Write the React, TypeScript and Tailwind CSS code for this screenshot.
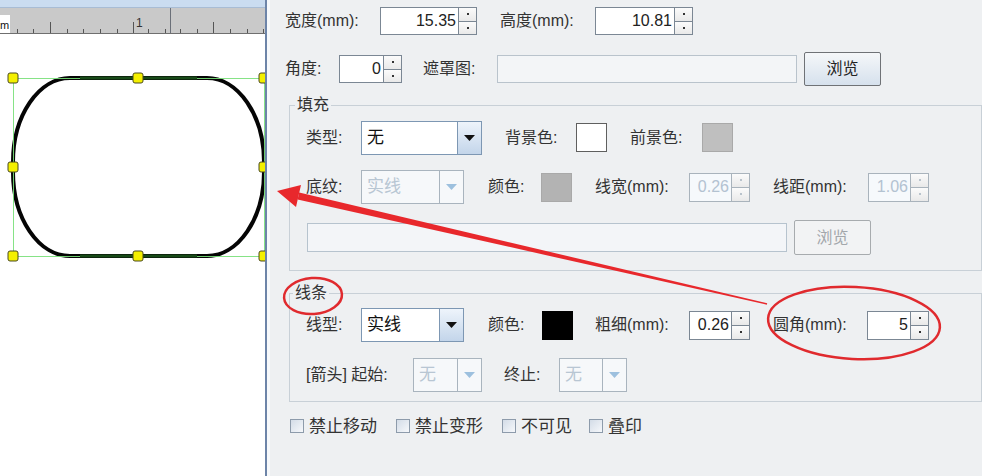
import React from 'react';
import clsx from 'clsx';

const Label = ({ w, children }: { w: string; children: React.ReactNode }) => (
  <span className={clsx('shrink-0 whitespace-nowrap text-[16px] leading-none text-[#333]', w)}>{children}</span>
);

const Spin = ({ value, w, h = 'h-[29px]', disabled }: { value: string; w: string; h?: string; disabled?: boolean }) => (
  <div
    className={clsx(
      'flex shrink-0 border',
      w,
      h,
      disabled ? 'border-[#a9b3bc] bg-[#f6f9fc] text-[#b3c2d1]' : 'border-[#7b8794] bg-white text-[#222]'
    )}
  >
    <div className="flex flex-1 items-center justify-end pr-[2px] text-[16px]">{value}</div>
    <div className={clsx('flex w-[18px] flex-col border-l', disabled ? 'border-[#a9b3bc]' : 'border-[#7b8794]')}>
      <div className="flex flex-1 items-center justify-center bg-linear-to-b from-[#fbfbfb] to-[#e9e9e9]">
        <div className={clsx('h-[2px] w-[2px]', disabled ? 'bg-[#b9c3cc]' : 'bg-[#333]')} />
      </div>
      <div
        className={clsx(
          'flex flex-1 items-center justify-center border-t bg-linear-to-b from-[#fbfbfb] to-[#e9e9e9]',
          disabled ? 'border-[#a9b3bc]' : 'border-[#7b8794]'
        )}
      >
        <div className={clsx('h-[2px] w-[2px]', disabled ? 'bg-[#b9c3cc]' : 'bg-[#333]')} />
      </div>
    </div>
  </div>
);

const Combo = ({ value, w, disabled }: { value: string; w: string; disabled?: boolean }) => (
  <div
    className={clsx(
      'flex h-[34px] shrink-0 border',
      w,
      disabled ? 'border-[#a9b4be] bg-[#f6f8fa] text-[#b8c6d3]' : 'border-[#7d97b3] bg-white text-[#111]'
    )}
  >
    <div className="flex flex-1 items-center pl-[5px] text-[17px]">{value}</div>
    <div
      className={clsx(
        'flex w-[24px] items-center justify-center border-l',
        disabled ? 'border-[#a9b4be] bg-[#f6f8fa]' : 'border-[#7d97b3] bg-linear-to-b from-[#eef4fb] to-[#c3d5ea]'
      )}
    >
      <svg width="11" height="6" viewBox="0 0 11 6">
        <path d="M0 0 H11 L5.5 6 Z" fill={disabled ? '#9dc0de' : '#111'} />
      </svg>
    </div>
  </div>
);

const Swatch = ({ color }: { color: string }) => (
  <div className={clsx('h-[29px] w-[31px] shrink-0 border', color)} />
);

const Button = ({ h, disabled }: { h: string; disabled?: boolean }) => (
  <div
    className={clsx(
      'flex w-[77px] shrink-0 items-center justify-center rounded-[2px] border text-[16px]',
      h,
      disabled
        ? 'border-[#a7abae] bg-[#f2f3f4] text-[#a3a7ab]'
        : 'border-[#6f7276] bg-linear-to-b from-[#f5f7f9] to-[#d6e1ed] text-[#222]'
    )}
  >
    浏览
  </div>
);

const Check = ({ w, label }: { w: string; label: string }) => (
  <div className={clsx('flex shrink-0 items-center', w)}>
    <div className="h-[14px] w-[14px] border border-[#8d9bab] bg-linear-to-br from-[#d3dce7] to-[#f6f8fb]" />
    <span className="ml-[5px] text-[17px] leading-none text-[#333]">{label}</span>
  </div>
);

const Ruler = () => {
  const small = [17, 33, 67, 83, 100, 117, 148, 165, 180, 197, 230, 247, 263];
  const tall = [50, 133, 213];
  return (
    <svg width="265" height="26" className="block">
      <rect width="265" height="26" fill="#c9c9c9" />
      {small.map((x) => (
        <line key={x} x1={x + 0.5} y1="21" x2={x + 0.5} y2="26" stroke="#555" />
      ))}
      {tall.map((x) => (
        <line key={x} x1={x + 0.5} y1="14" x2={x + 0.5} y2="26" stroke="#555" />
      ))}
      <line x1="170.5" y1="0" x2="170.5" y2="26" stroke="#6a6f78" />
      <rect x="0" y="7" width="10" height="19" fill="#fff" />
      <text x="0" y="21" fontSize="11" fill="#111" fontFamily="Liberation Sans, sans-serif">
        m
      </text>
      <text x="136" y="19" fontSize="12" fill="#333" fontFamily="Liberation Sans, sans-serif">
        1
      </text>
      <line x1="0" y1="25.5" x2="265" y2="25.5" stroke="#6f6f6f" />
    </svg>
  );
};

const Canvas = () => {
  const handles: [number, number][] = [
    [13, 78],
    [138, 78],
    [264, 78],
    [13, 167],
    [264, 167],
    [13, 256],
    [138, 256],
    [264, 256],
  ];
  return (
    <svg width="265" height="442" viewBox="0 34 265 442" className="block">
      <path
        d="M70 78 H207 A57 84 0 0 1 264 162 V172 A57 84 0 0 1 207 256 H70 A57 84 0 0 1 13 172 V162 A57 84 0 0 1 70 78 Z"
        fill="none"
        stroke="#050505"
        strokeWidth="4"
      />
      <rect x="13.5" y="78.5" width="251" height="178" fill="none" stroke="#79e079" strokeWidth="1" opacity="0.9" />
      <line x1="80" y1="78" x2="197" y2="78" stroke="#184a18" strokeWidth="3" />
      <line x1="80" y1="256" x2="197" y2="256" stroke="#184a18" strokeWidth="3" />
      {handles.map(([x, y]) => (
        <rect key={`${x}-${y}`} x={x - 5} y={y - 5} width="10" height="10" rx="2" fill="#f4f000" stroke="#4a4a20" />
      ))}
    </svg>
  );
};

export default function App() {
  return (
    <div className="relative flex h-[476px] w-[982px] overflow-hidden bg-[#eef0f2] font-['Liberation_Sans','Noto_Sans_CJK_SC',sans-serif]">
      <div className="flex w-[265px] shrink-0 flex-col overflow-hidden bg-white">
        <div className="h-[8px] border-b border-[#a8bcd4] bg-[#cadcf0]" />
        <Ruler />
        <Canvas />
      </div>
      <div className="w-[2px] shrink-0 bg-[#6d84a8]" />

      <div className="flex flex-1 flex-col border-l-[3px] border-[#f7f9fb] pt-[7px]">
        <div className="flex h-[28px] items-center pl-[15px]">
          <Label w="w-[95px]">宽度(mm):</Label>
          <Spin w="w-[97px]" h="h-[28px]" value="15.35" />
          <Label w="w-[95px] ml-[23px]">高度(mm):</Label>
          <Spin w="w-[98px]" h="h-[28px]" value="10.81" />
        </div>

        <div className="mt-[20px] flex h-[28px] items-center pl-[15px]">
          <Label w="w-[54px]">角度:</Label>
          <Spin w="w-[63px]" h="h-[28px]" value="0" />
          <Label w="w-[74px] ml-[21px]">遮罩图:</Label>
          <div className="h-[28px] w-[300px] shrink-0 border border-[#b9c3cc] bg-[#f3f5f7]" />
          <div className="ml-[7px]">
            <Button h="h-[34px]" />
          </div>
        </div>

        <fieldset className="mt-[14px] ml-[19px] min-w-0 border border-[#c8d0d7] p-0 pb-[15px]">
          <legend className="ml-[5px] px-[2px] text-[16px] leading-[16px] text-[#333]">填充</legend>
          <div className="mt-[8px] flex h-[33px] items-center pl-[16px]">
            <Label w="w-[55px]">类型:</Label>
            <Combo w="w-[121px]" value="无" />
            <Label w="w-[71px] ml-[23px]">背景色:</Label>
            <Swatch color="border-[#5f5f5f] bg-white" />
            <Label w="w-[72px] ml-[23px]">前景色:</Label>
            <Swatch color="border-[#a9a9a9] bg-[#bfbfbf]" />
          </div>
          <div className="mt-[16px] flex h-[34px] items-center pl-[16px]">
            <Label w="w-[55px]">底纹:</Label>
            <Combo w="w-[103px]" value="实线" disabled />
            <Label w="w-[53px] ml-[24px]">颜色:</Label>
            <Swatch color="border-[#a9a9a9] bg-[#b3b3b3]" />
            <Label w="w-[94px] ml-[23px]">线宽(mm):</Label>
            <Spin w="w-[61px]" value="0.26" disabled />
            <Label w="w-[95px] ml-[23px]">线距(mm):</Label>
            <Spin w="w-[61px]" value="1.06" disabled />
          </div>
          <div className="mt-[16px] flex h-[35px] items-center pl-[17px]">
            <div className="h-[29px] w-[480px] shrink-0 border border-[#b6c3ce] bg-[#f3f5f8]" />
            <div className="ml-[7px]">
              <Button h="h-[35px]" disabled />
            </div>
          </div>
        </fieldset>

        <fieldset className="mt-[14px] ml-[19px] min-w-0 border border-[#c8d0d7] p-0 pb-[9px]">
          <legend className="ml-[3px] px-[2px] text-[16px] leading-[16px] text-[#333]">线条</legend>
          <div className="mt-[7px] flex h-[34px] items-center pl-[16px]">
            <Label w="w-[55px]">线型:</Label>
            <Combo w="w-[103px]" value="实线" />
            <Label w="w-[54px] ml-[24px]">颜色:</Label>
            <Swatch color="border-[#000] bg-black" />
            <Label w="w-[94px] ml-[22px]">粗细(mm):</Label>
            <Spin w="w-[61px]" value="0.26" />
            <Label w="w-[94px] ml-[23px]">圆角(mm):</Label>
            <Spin w="w-[62px]" value="5" />
          </div>
          <div className="mt-[16px] flex h-[34px] items-center pl-[16px]">
            <Label w="w-[107px]">[箭头] 起始:</Label>
            <Combo w="w-[69px]" value="无" disabled />
            <Label w="w-[55px] ml-[22px]">终止:</Label>
            <Combo w="w-[68px]" value="无" disabled />
          </div>
        </fieldset>

        <div className="mt-[14px] flex h-[20px] items-center pl-[20px]">
          <Check w="w-[106px]" label="禁止移动" />
          <Check w="w-[106px]" label="禁止变形" />
          <Check w="w-[87px]" label="不可见" />
          <Check w="w-[80px]" label="叠印" />
        </div>
      </div>

      <svg className="pointer-events-none absolute inset-0" width="982" height="476">
        <polygon
          points="299.2,192.6 767.2,303.3 766.8,304.7 297.6,199.4"
          fill="#e8282c"
        />
        <polygon points="277,191 301,185 296,207" fill="#e8282c" />
        <ellipse cx="313" cy="296" rx="29" ry="18" fill="none" stroke="#e02a2e" strokeWidth="2.5" transform="rotate(-4 313 296)" />
        <ellipse cx="854" cy="323" rx="86" ry="36" fill="none" stroke="#e02a2e" strokeWidth="2.5" transform="rotate(3 854 323)" />
      </svg>
    </div>
  );
}
